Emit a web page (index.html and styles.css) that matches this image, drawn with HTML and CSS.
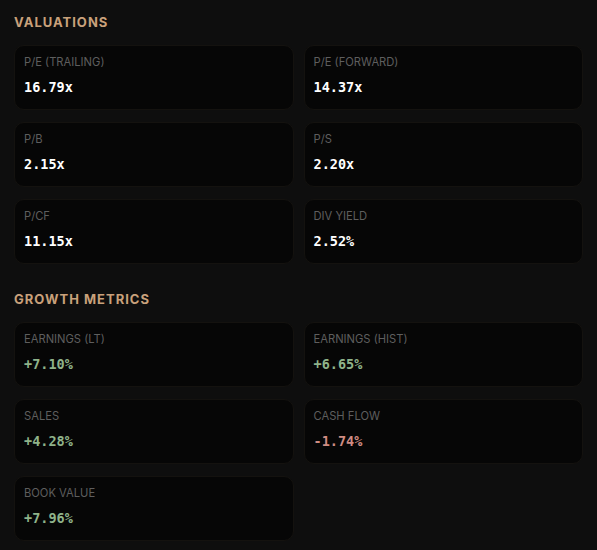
FILE: index.html
```html
<!DOCTYPE html>
<html lang="en">
<head>
  <meta charset="UTF-8">
  <meta name="viewport" content="width=device-width, initial-scale=1.0">
  <title>Fundamentals</title>
  <link rel="stylesheet" href="styles.css">
</head>
<body>
  <div class="panel">
    <section class="section">
      <h2>Valuations</h2>
      <div class="grid">
        <div class="card"><div class="label">P/E (Trailing)</div><div class="value">16.79x</div></div>
        <div class="card"><div class="label">P/E (Forward)</div><div class="value">14.37x</div></div>
        <div class="card"><div class="label">P/B</div><div class="value">2.15x</div></div>
        <div class="card"><div class="label">P/S</div><div class="value">2.20x</div></div>
        <div class="card"><div class="label">P/CF</div><div class="value">11.15x</div></div>
        <div class="card"><div class="label">Div Yield</div><div class="value">2.52%</div></div>
      </div>
    </section>

    <section class="section">
      <h2>Growth Metrics</h2>
      <div class="grid">
        <div class="card"><div class="label">Earnings (LT)</div><div class="value up">+7.10%</div></div>
        <div class="card"><div class="label">Earnings (Hist)</div><div class="value up">+6.65%</div></div>
        <div class="card"><div class="label">Sales</div><div class="value up">+4.28%</div></div>
        <div class="card"><div class="label">Cash Flow</div><div class="value down">-1.74%</div></div>
        <div class="card"><div class="label">Book Value</div><div class="value up">+7.96%</div></div>
      </div>
    </section>
  </div>
</body>
</html>
```

FILE: styles.css
```css
* {
  margin: 0;
  padding: 0;
  box-sizing: border-box;
}

body {
  font-family: 'Inter', 'Noto Sans', sans-serif;
  background: #0e0e0e;
  color: #ddd;
}

.panel {
  padding: 14px 14px 0;
}

.section {
  margin-bottom: 27px;
}

.section:last-child {
  margin-bottom: 0;
}

h2 {
  font-size: 13px;
  line-height: 16px;
  font-weight: 700;
  letter-spacing: 1px;
  text-transform: uppercase;
  color: #c9a17b;
  margin-bottom: 15px;
}

.grid {
  display: grid;
  grid-template-columns: 1fr 1fr;
  gap: 12px 10px;
}

.card {
  background: #060606;
  border: 1px solid #14120f;
  border-radius: 10px;
  padding: 9px 9px;
  height: 65px;
}

.label {
  font-size: 11.2px;
  line-height: 14px;
  text-transform: uppercase;
  color: #5e5e5e;
  margin-bottom: 9px;
}

.value {
  font-family: 'DejaVu Sans Mono', monospace;
  font-size: 13.5px;
  line-height: 18px;
  font-weight: 700;
  color: #fff;
}

.value.up { color: #8fb38a; }
.value.down { color: #cf8c83; }
```
